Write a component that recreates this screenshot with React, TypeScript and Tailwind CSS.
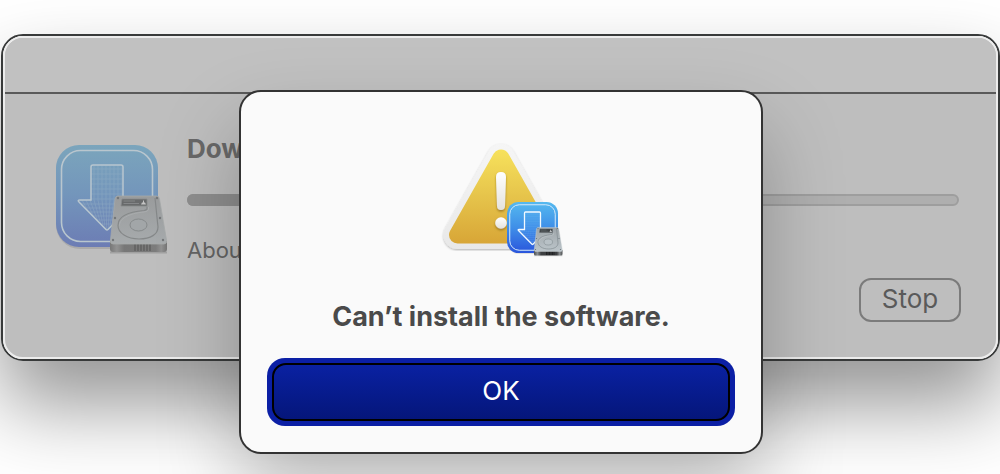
import { useId } from 'react';

interface InstallerIconProps {
  className?: string;
  x?: number;
  y?: number;
  width?: number;
  height?: number;
  dimmed?: boolean;
}

const GRID_X = [30, 34, 38, 42, 46, 50, 54, 58, 62, 66, 70, 74, 78, 82];
const GRID_Y = [28, 33, 38, 43, 48, 53, 58, 63, 67, 71, 75, 79, 83];
const ARROW = 'M41 24H69Q71 24 71 26V59H82Q85 59 83 61L56 88.500Q55 89.500 54 88.500L27 61Q25 59 28 59H39V26Q39 24 41 24Z';
const SCREWS = [
  [66, 57],
  [105, 57],
  [63, 77],
  [108, 77],
  [61, 99],
  [111, 99],
];

function InstallerIcon({ dimmed = false, ...rest }: InstallerIconProps) {
  const id = useId();
  const tile = `${id}-tile`;
  const plate = `${id}-plate`;
  const base = `${id}-base`;
  const clip = `${id}-clip`;

  return (
    <svg viewBox="0 0 120 116" aria-hidden="true" {...rest}>
      <defs>
        <linearGradient id={tile} x1="0" y1="0" x2="0" y2="1">
          <stop offset="0" stopColor={dimmed ? '#7ba5bc' : '#55b9ef'} />
          <stop offset="0.5" stopColor={dimmed ? '#7395bb' : '#3f8fe8'} />
          <stop offset="1" stopColor={dimmed ? '#6c7cb4' : '#2a55dc'} />
        </linearGradient>
        <linearGradient id={plate} x1="0" y1="0" x2="0" y2="1">
          <stop offset="0" stopColor={dimmed ? '#999b9c' : '#9ea5a9'} />
          <stop offset="1" stopColor={dimmed ? '#a7abad' : '#bcc5ca'} />
        </linearGradient>
        <linearGradient id={base} x1="0" y1="0" x2="1" y2="0">
          <stop offset="0" stopColor={dimmed ? '#777777' : '#4a4d4f'} />
          <stop offset="0.12" stopColor={dimmed ? '#929292' : '#8b8f91'} />
          <stop offset="0.25" stopColor={dimmed ? '#777777' : '#3c3e40'} />
          <stop offset="0.8" stopColor={dimmed ? '#7c7c7c' : '#3c3e40'} />
          <stop offset="0.9" stopColor={dimmed ? '#929292' : '#8b8f91'} />
          <stop offset="1" stopColor={dimmed ? '#747474' : '#4a4d4f'} />
        </linearGradient>
        <clipPath id={clip}>
          <path d={ARROW} />
        </clipPath>
      </defs>

      <rect x="4" y="6" width="102" height="102" rx="24" fill="#000" opacity="0.1" />
      <rect x="4" y="4" width="102" height="102" rx="23" fill={`url(#${tile})`} />
      <rect
        x="9.500"
        y="9.500"
        width="91"
        height="91"
        rx="19"
        fill="none"
        stroke={dimmed ? '#b9c6ce' : '#d4eafb'}
        strokeWidth={dimmed ? 1.6 : 2}
      />
      <g clipPath={`url(#${clip})`} stroke={dimmed ? '#a3bccb' : '#7cc0f5'} strokeWidth="0.6" opacity="0.5">
        {GRID_X.map((x) => (
          <path key={x} d={`M${x} 24V59L${55 + (x - 55) * 0.35} 89`} fill="none" />
        ))}
        {GRID_Y.map((y) => (
          <path key={y} d={`M24 ${y}H86`} />
        ))}
      </g>
      <path d={ARROW} fill="none" stroke={dimmed ? '#b8c6cf' : '#f2f9ff'} strokeWidth={dimmed ? 1.5 : 2.6} />

      {/* hard drive */}
      <path d="M58 111.500H115" stroke="#000" strokeWidth="2" opacity="0.15" />
      <path d="M58 100H115V108Q115 111 112 111H61Q58 111 58 108Z" fill={`url(#${base})`} />
      <path d="M83 103V110M86 103V110M89 103V110M92 103V110M95 103V110M98 103V110" stroke={dimmed ? '#5f5f5f' : '#17191a'} strokeWidth="1.4" />
      <path
        d="M66 55H104.500Q107 55 107.500 58L114.500 99Q115 103 112 103H61Q58 103 58.500 99L63 58Q63.500 55 66 55Z"
        fill={`url(#${plate})`}
        stroke={dimmed ? '#a6a9aa' : '#ccd3d6'}
        strokeWidth="0.8"
      />
      <path
        d="M95 65.500V67.500Q95 69 92 69.500C74 71 66 77 66 84.500C66 92 75 98 87 98C99 98 106 93 106 86L103 57"
        fill="none"
        stroke={dimmed ? '#858889' : '#7b8589'}
        strokeWidth="1.200"
      />
      <path
        d="M96.500 66V68.500Q96 70.500 92 71C76 72.500 67.500 78 67.500 84.500"
        fill="none"
        stroke={dimmed ? '#adb0b2' : '#d5dcdf'}
        strokeWidth="0.700"
      />
      <ellipse cx="86.500" cy="84" rx="8.500" ry="6" fill={dimmed ? '#a2a6a8' : '#b8c1c6'} stroke={dimmed ? '#868a8b' : '#7b8589'} />
      <path d="M70 58H95V65H69Z" fill={dimmed ? '#686a6b' : '#3c4144'} stroke={dimmed ? '#888a8b' : '#666c70'} strokeWidth="0.8" />
      <path d="M71.500 60H83M71.500 62.500H87" stroke={dimmed ? '#8d8f90' : '#7d8488'} strokeWidth="0.8" />
      <path d="M89 63.500H94L93 61.500H92V59.500H91V61.500H90Z" fill={dimmed ? '#c5c5c5' : '#e5e8ea'} />
      {SCREWS.map(([cx, cy]) => (
        <circle key={`${cx}-${cy}`} cx={cx} cy={cy} r="1.2" fill={dimmed ? '#747779' : '#697175'} />
      ))}
    </svg>
  );
}

function WarningIcon() {
  return (
    <svg viewBox="0 0 130 124" className="h-[124px] w-[130px]" aria-hidden="true">
      <defs>
        <linearGradient id="warn-fill" gradientUnits="userSpaceOnUse" x1="0" y1="11" x2="0" y2="105">
          <stop offset="0" stopColor="#f7e25c" />
          <stop offset="0.5" stopColor="#e6c44b" />
          <stop offset="1" stopColor="#d8a637" />
        </linearGradient>
        <linearGradient id="warn-rim" gradientUnits="userSpaceOnUse" x1="0" y1="4" x2="0" y2="112">
          <stop offset="0" stopColor="#f6f6f6" />
          <stop offset="1" stopColor="#e8e8e8" />
        </linearGradient>
        <linearGradient id="warn-mark" x1="0" y1="0" x2="0" y2="1">
          <stop offset="0" stopColor="#ffffff" />
          <stop offset="1" stopColor="#e4e2dc" />
        </linearGradient>
        <filter id="warn-shadow" x="-20%" y="-20%" width="140%" height="140%">
          <feDropShadow dx="0" dy="1" stdDeviation="1.200" floodColor="#000" floodOpacity="0.3" />
        </filter>
        <filter id="mark-shadow" x="-60%" y="-30%" width="220%" height="170%">
          <feDropShadow dx="0" dy="1.500" stdDeviation="0.8" floodColor="#6e5010" floodOpacity="0.6" />
        </filter>
      </defs>
      <g strokeLinejoin="round">
        <path d="M65 20L108.500 97H21.500Z" fill="url(#warn-rim)" stroke="url(#warn-rim)" strokeWidth="28" filter="url(#warn-shadow)" />
        <path d="M65 20L108.500 97H21.500Z" fill="url(#warn-fill)" stroke="url(#warn-fill)" strokeWidth="17" />
      </g>
      <g fill="url(#warn-mark)" filter="url(#mark-shadow)">
        <path d="M60 39Q60 34 65 34Q70 34 70 39L69 68Q69 72 65 72Q61 72 61 68Z" />
        <circle cx="65" cy="85" r="5.800" />
      </g>
      <InstallerIcon x={69} y={62} width={60} height={58} />
    </svg>
  );
}

function InstallWindow() {
  return (
    <section
      aria-label="Software installation"
      className="ml-px rounded-[22px] border-2 border-[#383a3a] shadow-[0_44px_80px_rgba(0,0,0,0.42)]"
    >
      <div className="overflow-hidden rounded-[20px] border-2 border-[#ececec] bg-[#bebebe]">
        <div className="h-14 border-b-2 border-[#5a5a5a] bg-[#c1c1c1]" />
        <div className="pt-[39px] pr-[35px] pb-[35px] pl-[47px]">
          <div className="flex items-start gap-[15px]">
            <InstallerIcon dimmed className="mt-2 h-[116px] w-[120px] shrink-0" />
            <div className="min-w-0 flex-1 pr-0.5">
              <h1 className="text-[26px] leading-8 font-bold text-[#686868]">Downloading</h1>
              <div
                role="progressbar"
                aria-label="Download progress"
                aria-valuenow={30}
                aria-valuemin={0}
                aria-valuemax={100}
                className="mt-[29px] h-3 rounded-full border-2 border-[#9e9e9e] bg-[#afafaf]"
              >
                <div className="-m-0.5 h-3 w-[30%] rounded-full bg-[#8e8e8e]" />
              </div>
              <p className="mt-[30px] text-[22px] leading-7 text-[#646464]">About</p>
            </div>
          </div>
          <div className="mt-3.5 flex justify-end">
            <button
              type="button"
              className="h-11 w-[102px] rounded-xl border-2 border-[#7b7b7b] pb-0.5 text-[26px] leading-8 text-[#5a5a5a]"
            >
              Stop
            </button>
          </div>
        </div>
      </div>
    </section>
  );
}

function AlertDialog() {
  return (
    <div
      role="alertdialog"
      aria-modal="true"
      aria-labelledby="alert-title"
      className="flex w-[524px] flex-col items-center rounded-[22px] border-2 border-[#333333] bg-[#fafafa] px-[26px] pt-[46px] pb-[26px] shadow-[0_40px_80px_rgba(0,0,0,0.26)]"
    >
      <WarningIcon />
      <h2 id="alert-title" className="mt-[38px] text-[27px] leading-[34px] font-bold text-[#4a4a4a]">
        Can’t install the software.
      </h2>
      <button type="button" className="mt-6 w-full rounded-[18px] bg-[#0b1fa5] p-[5px] text-[26px] leading-8 text-white">
        <span className="flex h-[58px] items-center justify-center rounded-[14px] border-2 border-black bg-linear-to-b from-[#0a21a2] to-[#05167a] pb-0.5">
          OK
        </span>
      </button>
    </div>
  );
}

export default function App() {
  return (
    <main className="relative min-h-screen overflow-hidden bg-white pt-[34px] font-['Inter','Liberation_Sans',sans-serif]">
      <InstallWindow />
      <div className="absolute inset-0 flex items-start justify-center pt-[90px] pl-0.5">
        <AlertDialog />
      </div>
    </main>
  );
}
